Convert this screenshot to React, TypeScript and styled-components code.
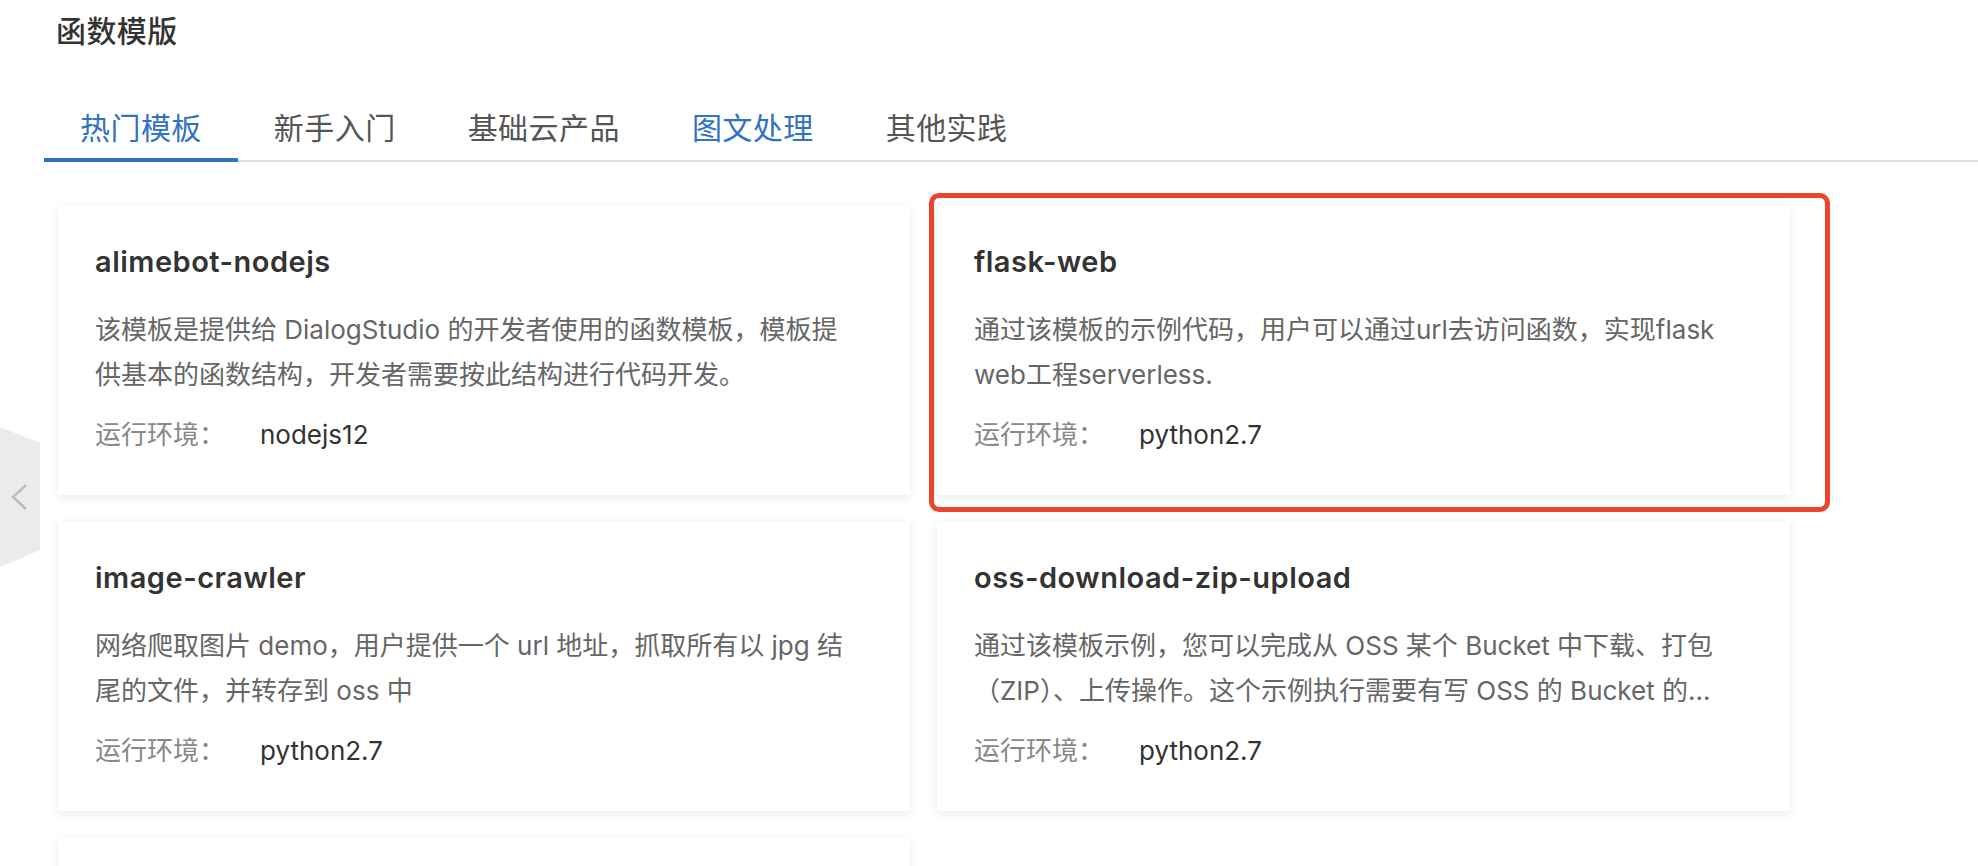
import React from 'react';
import styled, { createGlobalStyle } from 'styled-components';

const GlobalStyle = createGlobalStyle`
  html, body { margin: 0; padding: 0; background: #fff; }
  body { font-family: Inter, "Noto Sans CJK SC", sans-serif; }
  * { box-sizing: border-box; }
`;

const Page = styled.div`
  position: relative;
  height: 866px;
  overflow: hidden;
  padding: 8px 0 0 44px;
`;

const Heading = styled.h1`
  margin: 0 0 0 12px;
  font-family: "Noto Sans CJK SC", sans-serif;
  font-size: 30px;
  line-height: 42px;
  font-weight: 500;
  letter-spacing: 0.4px;
  color: #333;
`;

const TabBar = styled.div`
  display: flex;
  margin-top: 50px;
  border-bottom: 2px solid #dedede;
`;

const Tab = styled.div<{ $active?: boolean; $blue?: boolean }>`
  padding: 4px 36px 10px;
  margin-bottom: -2px;
  font-family: "Noto Sans CJK SC", sans-serif;
  font-size: 30px;
  line-height: 44px;
  letter-spacing: 0.45px;
  color: ${p => (p.$blue ? '#2f72c6' : '#555')};
  border-bottom: 4px solid ${p => (p.$active ? '#2f72c6' : 'transparent')};
  cursor: pointer;
`;

const Grid = styled.div`
  display: grid;
  grid-template-columns: 852px 853px;
  column-gap: 27px;
  row-gap: 27px;
  margin: 44px 0 0 14px;
`;

const Card = styled.div`
  position: relative;
  height: 289px;
  padding: 36px 58px 38px 37px;
  background: #fff;
  box-shadow: 0 2px 10px rgba(0, 0, 0, 0.09);
`;

const CardTitle = styled.div`
  font-size: 29px;
  line-height: 40px;
  font-weight: 600;
  letter-spacing: 0.5px;
  color: #333;
`;

const Desc = styled.div`
  margin-top: 25px;
  font-size: 26px;
  line-height: 45px;
  color: #666;
  display: -webkit-box;
  -webkit-line-clamp: 2;
  -webkit-box-orient: vertical;
  overflow: hidden;
  height: 90px;
`;

const EnvRow = styled.div`
  display: flex;
  margin-top: 15px;
  font-size: 26px;
  line-height: 45px;
`;

const EnvLabel = styled.span`
  width: 165px;
  color: #888;
`;

const EnvValue = styled.span`
  color: #333;
`;

const Highlight = styled.div`
  position: absolute;
  top: -13px;
  left: -8px;
  right: -40px;
  bottom: -17px;
  border: 5px solid #ea442c;
  border-radius: 10px;
  pointer-events: none;
`;

const SideTab = styled.div`
  position: absolute;
  left: 0;
  top: 427px;
  width: 40px;
  height: 140px;
  background: #ebebeb;
  clip-path: polygon(0 0, 100% 16px, 100% calc(100% - 17px), 0 100%);
  display: flex;
  align-items: center;
  padding-left: 10px;
`;

type Item = { name: string; desc: string; env: string; highlight?: boolean };

const items: Item[] = [
  {
    name: 'alimebot-nodejs',
    desc: '该模板是提供给 DialogStudio 的开发者使用的函数模板，模板提供基本的函数结构，开发者需要按此结构进行代码开发。',
    env: 'nodejs12',
  },
  {
    name: 'flask-web',
    desc: '通过该模板的示例代码，用户可以通过url去访问函数，实现flask web工程serverless.',
    env: 'python2.7',
    highlight: true,
  },
  {
    name: 'image-crawler',
    desc: '网络爬取图片 demo，用户提供一个 url 地址，抓取所有以 jpg 结尾的文件，并转存到 oss 中',
    env: 'python2.7',
  },
  {
    name: 'oss-download-zip-upload',
    desc: '通过该模板示例，您可以完成从 OSS 某个 Bucket 中下载、打包（ZIP）、上传操作。这个示例执行需要有写 OSS 的 Bucket 的权限，请在函数的服务中配置好角色。',
    env: 'python2.7',
  },
  {
    name: 'selenium-chrome',
    desc: '通过该模板示例，您可以在函数计算中使用 selenium 和 chrome 进行网页截图。',
    env: 'python2.7',
  },
];

const tabs = [
  { label: '热门模板', active: true, blue: true },
  { label: '新手入门' },
  { label: '基础云产品' },
  { label: '图文处理', blue: true },
  { label: '其他实践' },
];

export default function App() {
  return (
    <Page>
      <GlobalStyle />
      <SideTab>
        <svg width="18" height="28" viewBox="0 0 18 28">
          <path d="M16 2 L3 14 L16 26" fill="none" stroke="#bcbcbc" strokeWidth="2.4" />
        </svg>
      </SideTab>
      <Heading>函数模版</Heading>
      <TabBar>
        {tabs.map(t => (
          <Tab key={t.label} $active={t.active} $blue={t.blue}>
            {t.label}
          </Tab>
        ))}
      </TabBar>
      <Grid>
        {items.map(it => (
          <Card key={it.name}>
            <CardTitle>{it.name}</CardTitle>
            <Desc>{it.desc}</Desc>
            <EnvRow>
              <EnvLabel>运行环境：</EnvLabel>
              <EnvValue>{it.env}</EnvValue>
            </EnvRow>
            {it.highlight && <Highlight />}
          </Card>
        ))}
      </Grid>
    </Page>
  );
}
